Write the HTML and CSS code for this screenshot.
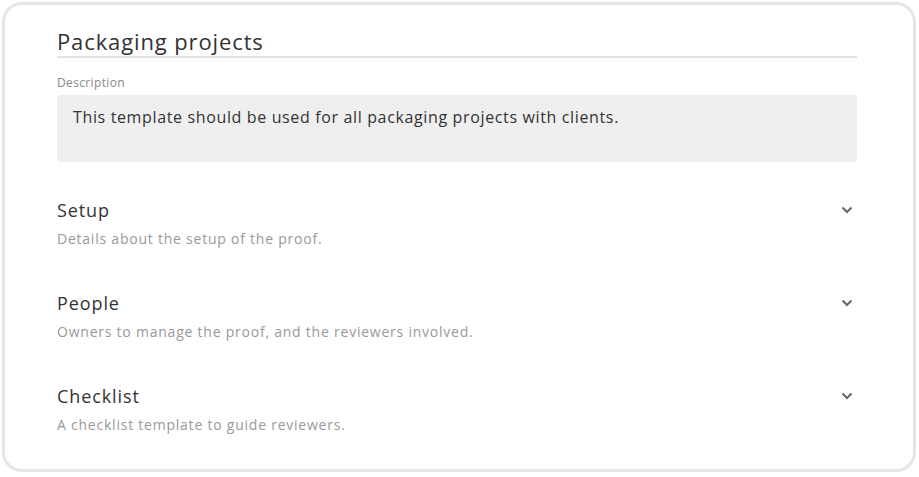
FILE: index.html
```html
<!DOCTYPE html>
<html lang="en">
<head>
    <meta charset="UTF-8">
    <title>Packaging projects</title>
    <link rel="stylesheet" href="styles.css">
</head>
<body>
    <div class="card">
        <h1 class="title">Packaging projects</h1>

        <label class="field-label">Description</label>
        <div class="description">This template should be used for all packaging projects with clients.</div>

        <!-- Collapsible sections -->
        <div class="section">
            <div class="section-head">
                <h2>Setup</h2>
                <svg class="chevron" viewBox="0 0 12 8" width="12" height="8"><path d="M1.5 1.5 L6 6 L10.5 1.5"/></svg>
            </div>
            <p>Details about the setup of the proof.</p>
        </div>

        <div class="section">
            <div class="section-head">
                <h2>People</h2>
                <svg class="chevron" viewBox="0 0 12 8" width="12" height="8"><path d="M1.5 1.5 L6 6 L10.5 1.5"/></svg>
            </div>
            <p>Owners to manage the proof, and the reviewers involved.</p>
        </div>

        <div class="section">
            <div class="section-head">
                <h2>Checklist</h2>
                <svg class="chevron" viewBox="0 0 12 8" width="12" height="8"><path d="M1.5 1.5 L6 6 L10.5 1.5"/></svg>
            </div>
            <p>A checklist template to guide reviewers.</p>
        </div>
    </div>
</body>
</html>
```

FILE: styles.css
```css
* {
    margin: 0;
    padding: 0;
    box-sizing: border-box;
    font-family: "Open Sans", "Noto Sans", sans-serif;
}

body {
    background: #fff;
    padding: 2px 3px 5px 2px;
}

.card {
    border: 3px solid #e6e6e6;
    border-radius: 20px;
    padding: 21px 56px 26px 52px;
    height: 470px;
}

.title {
    font-size: 22px;
    font-weight: 400;
    color: #333;
    line-height: 30px;
    letter-spacing: 0.04em;
    border-bottom: 2px solid #e3e3e3;
}

.field-label {
    display: block;
    margin-top: 17px;
    font-size: 12px;
    color: #888;
    line-height: 16px;
    letter-spacing: 0.03em;
}

.description {
    margin-top: 4px;
    height: 67px;
    background: #efefef;
    border-radius: 4px;
    padding: 11px 16px;
    font-size: 16px;
    line-height: 22px;
    letter-spacing: 0.04em;
    color: #333;
}

.section {
    margin-top: 36px;
}

.section + .section {
    margin-top: 42px;
}

.section-head {
    display: flex;
    justify-content: space-between;
    align-items: center;
}

.section h2 {
    font-size: 18px;
    font-weight: 400;
    color: #333;
    line-height: 24px;
    letter-spacing: 0.05em;
}

.chevron {
    margin-right: 4px;
    fill: none;
    stroke: #666;
    stroke-width: 2;
}

.section p {
    margin-top: 7px;
    font-size: 14px;
    color: #999;
    line-height: 20px;
    letter-spacing: 0.055em;
}
```
